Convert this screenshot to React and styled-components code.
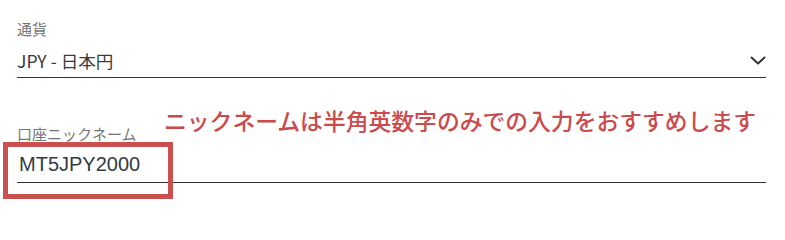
import React from "react";
import styled, { createGlobalStyle } from "styled-components";

const Global = createGlobalStyle`
  html, body { margin: 0; padding: 0; background: #fff; }
  body { font-family: "Noto Sans CJK JP", "Noto Sans", sans-serif; }
`;

const Page = styled.div`
  position: relative;
  width: 785px;
  height: 205px;
  box-sizing: border-box;
  padding: 0 19px 0 17px;
  overflow: hidden;
`;

const Field = styled.div`
  display: flex;
  flex-direction: column;
  padding-top: ${(p) => p.$top}px;
`;

const Label = styled.div`
  font-family: "Noto Sans CJK JP", sans-serif;
  font-size: 15px;
  line-height: 15px;
  color: #767676;
`;

const SelectRow = styled.div`
  display: flex;
  align-items: center;
  justify-content: space-between;
  margin-top: 8px;
  height: 33px;
  border-bottom: 1px solid #333;
`;

const SelectValue = styled.span`
  font-family: "Noto Sans CJK JP", sans-serif;
  font-size: 17.6px;
  line-height: 20px;
  color: #3a3a3a;
`;

const InputRow = styled.div`
  display: flex;
  align-items: center;
  padding: 12px 0 6px 2px;
  border-bottom: 1px solid #333;
`;

const InputValue = styled.span`
  font-family: "Liberation Sans", Arial, sans-serif;
  font-size: 20px;
  line-height: 23px;
  color: #333a44;
`;

const Hint = styled.div`
  position: absolute;
  left: 164px;
  top: 109px;
  font-family: "Noto Sans CJK JP", sans-serif;
  font-size: 22.8px;
  line-height: 24px;
  font-weight: 500;
  color: #cb4a4b;
  white-space: nowrap;
`;

const Highlight = styled.div`
  position: absolute;
  left: 3px;
  top: 142px;
  width: 170px;
  height: 57px;
  box-sizing: border-box;
  border: 5px solid #c9504f;
`;

const Chevron = () => (
  <svg width="16" height="9" viewBox="0 0 16 9">
    <polyline
      points="1.5,1.5 8,7.5 14.5,1.5"
      fill="none"
      stroke="#333"
      strokeWidth="2"
      strokeLinecap="round"
      strokeLinejoin="round"
    />
  </svg>
);

export default function App() {
  return (
    <>
      <Global />
      <Page>
        <Field $top={21}>
          <Label>通貨</Label>
          <SelectRow>
            <SelectValue>JPY - 日本円</SelectValue>
            <Chevron />
          </SelectRow>
        </Field>
        <Field $top={48}>
          <Label>口座ニックネーム</Label>
          <InputRow>
            <InputValue>MT5JPY2000</InputValue>
          </InputRow>
        </Field>
        <Hint>ニックネームは半角英数字のみでの入力をおすすめします</Hint>
        <Highlight />
      </Page>
    </>
  );
}
